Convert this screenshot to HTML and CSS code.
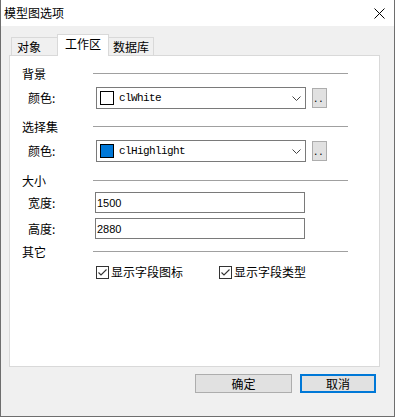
FILE: index.html
```html
<!DOCTYPE html>
<html lang="zh-CN">

<head>
  <meta charset="UTF-8" />
  <meta name="viewport" content="width=device-width, initial-scale=1.0" />
  <title>模型图选项</title>
  <link rel="stylesheet" href="styles.css">
</head>

<body>
  <div class="window">
    <div class="titlebar">
      <span class="title">模型图选项</span>
      <svg class="close" width="11" height="11" viewBox="0 0 11 11">
        <path d="M0.5 0.5 L10.5 10.5 M10.5 0.5 L0.5 10.5" stroke="#000" stroke-width="1" fill="none" />
      </svg>
    </div>

    <div class="content">
      <div class="tabs">
        <div class="tab tab-first">对象</div>
        <div class="tab tab-active">工作区</div>
        <div class="tab tab-last">数据库</div>
      </div>

      <div class="panel">
        <!-- 背景 -->
        <div class="group-head">
          <span class="group-title">背景</span>
          <span class="group-line"></span>
        </div>
        <div class="row row-combo">
          <label class="row-label">颜色:</label>
          <div class="combo">
            <span class="swatch"></span>
            <span class="combo-text">clWhite</span>
            <svg class="chevron" width="9" height="5" viewBox="0 0 9 5">
              <polyline points="0.5,0.5 4.5,4.5 8.5,0.5" stroke="#444" fill="none" />
            </svg>
          </div>
          <button class="dots">..</button>
        </div>

        <!-- 选择集 -->
        <div class="group-head group-gap">
          <span class="group-title">选择集</span>
          <span class="group-line"></span>
        </div>
        <div class="row row-combo">
          <label class="row-label">颜色:</label>
          <div class="combo">
            <span class="swatch swatch-blue"></span>
            <span class="combo-text">clHighlight</span>
            <svg class="chevron" width="9" height="5" viewBox="0 0 9 5">
              <polyline points="0.5,0.5 4.5,4.5 8.5,0.5" stroke="#444" fill="none" />
            </svg>
          </div>
          <button class="dots">..</button>
        </div>

        <!-- 大小 -->
        <div class="group-head group-gap-size">
          <span class="group-title">大小</span>
          <span class="group-line"></span>
        </div>
        <div class="row row-input first-input">
          <label class="row-label label-input">宽度:</label>
          <input class="edit" type="text" value="1500" />
        </div>
        <div class="row row-input">
          <label class="row-label label-input">高度:</label>
          <input class="edit" type="text" value="2880" />
        </div>

        <!-- 其它 -->
        <div class="group-head group-gap-other">
          <span class="group-title">其它</span>
          <span class="group-line"></span>
        </div>
        <div class="row row-checks">
          <label class="check check-first">
            <svg class="box" width="13" height="13" viewBox="0 0 13 13">
              <rect x="0.5" y="0.5" width="12" height="12" fill="#fff" stroke="#333" />
              <polyline points="2.5,6.5 5,9 10.5,3.5" stroke="#333" stroke-width="1.1" fill="none" />
            </svg>
            显示字段图标
          </label>
          <label class="check">
            <svg class="box" width="13" height="13" viewBox="0 0 13 13">
              <rect x="0.5" y="0.5" width="12" height="12" fill="#fff" stroke="#333" />
              <polyline points="2.5,6.5 5,9 10.5,3.5" stroke="#333" stroke-width="1.1" fill="none" />
            </svg>
            显示字段类型
          </label>
        </div>
      </div>

      <div class="buttons">
        <button class="btn btn-ok">确定</button>
        <button class="btn btn-cancel">取消</button>
      </div>
    </div>
  </div>
</body>

</html>
```

FILE: styles.css
```css
body,
html {
  margin: 0;
  padding: 0;
  background: #f0f0f0;
  font-family: "Noto Sans CJK SC", "Liberation Sans", sans-serif;
  font-size: 12px;
  color: #000;
}

.window {
  width: 395px;
  height: 417px;
  box-sizing: border-box;
  border: 1px solid #6e6e6e;
  border-top: none;
  background: #f0f0f0;
  display: flex;
  flex-direction: column;
}

.titlebar {
  height: 26px;
  background: #fff;
  display: flex;
  align-items: center;
  justify-content: space-between;
  padding: 0 9px 0 3px;
}

.title {
  line-height: 16px;
  margin-top: -1px;
}

.close {
  display: block;
  margin-top: 1px;
}

.content {
  padding: 8px 14px 0 8px;
}

/* 标签页 */
.tabs {
  display: flex;
  align-items: flex-end;
  height: 21px;
  padding-left: 2px;
}

.tab {
  box-sizing: border-box;
  height: 18px;
  line-height: 17px;
  border-top: 1px solid #d9d9d9;
  background: #f0f0f0;
  padding-left: 5px;
}

.tab-first {
  width: 46px;
  border-left: 1px solid #d9d9d9;
}

.tab-active {
  width: 52px;
  height: 22px;
  line-height: 18px;
  margin-bottom: -1px;
  border: 1px solid #d9d9d9;
  border-bottom: none;
  background: #fff;
  padding-left: 7px;
  position: relative;
  z-index: 1;
}

.tab-last {
  width: 45px;
  border-right: 1px solid #d9d9d9;
  padding-left: 4px;
}

.panel {
  box-sizing: border-box;
  width: 371px;
  height: 312px;
  border: 1px solid #d9d9d9;
  background: #fff;
  padding: 10px 31px 0 12px;
}

/* 分组标题 */
.group-head {
  display: flex;
  align-items: center;
  height: 16px;
}

.group-gap {
  margin-top: 10px;
}

.group-gap-size {
  margin-top: 11px;
}

.group-gap-other {
  margin-top: 5px;
}

.group-title {
  width: 71px;
  line-height: 16px;
}

.group-line {
  flex: 1;
  height: 1px;
  background: #a0a0a0;
  margin-top: -2px;
}

.row {
  display: flex;
  align-items: center;
  padding-left: 6px;
}

.row-label {
  width: 68px;
  line-height: 16px;
}

.label-input {
  width: 67px;
}

.row-combo {
  margin-top: 5px;
}

.combo {
  box-sizing: border-box;
  width: 210px;
  height: 22px;
  border: 1px solid #7a7a7a;
  display: flex;
  align-items: center;
  padding-left: 3px;
  background: #fff;
}

.swatch {
  box-sizing: border-box;
  width: 14px;
  height: 14px;
  border: 1px solid #000;
  background: #fff;
}

.swatch-blue {
  background: #0078d7;
}

.combo-text {
  margin-left: 5px;
  font-family: "Liberation Mono", monospace;
  font-size: 11px;
  letter-spacing: -0.6px;
}

.chevron {
  display: block;
  margin-left: auto;
  margin-right: 4px;
}

.dots {
  box-sizing: border-box;
  width: 15px;
  height: 20px;
  margin-left: 6px;
  padding: 0 0 0 1px;
  border: 1px solid #adadad;
  background: #e1e1e1;
  font-family: "Liberation Sans", sans-serif;
  font-size: 12px;
  letter-spacing: 2px;
  line-height: 16px;
  text-align: left;
}

.row-input {
  margin-top: 5px;
}

.first-input {
  margin-top: 3px;
}

.edit {
  box-sizing: border-box;
  width: 210px;
  height: 21px;
  margin: 0;
  border: 1px solid #7a7a7a;
  padding: 0 1px;
  font-family: "Liberation Sans", sans-serif;
  font-size: 11px;
  outline: none;
}

.row-checks {
  margin-top: 4px;
  padding-left: 74px;
  height: 16px;
}

.check {
  display: flex;
  align-items: center;
  gap: 2px;
  line-height: 16px;
}

.check-first {
  width: 123px;
}

.box {
  display: block;
}

/* 底部按钮 */
.buttons {
  display: flex;
  justify-content: flex-end;
  gap: 8px;
  margin-top: 7px;
  padding-right: 4px;
}

.btn {
  box-sizing: border-box;
  height: 19px;
  margin: 0;
  padding: 0;
  background: #e1e1e1;
  font-family: "Noto Sans CJK SC", sans-serif;
  font-size: 12px;
  line-height: 15px;
  color: #000;
}

.btn-ok {
  width: 97px;
  border: 1px solid #adadad;
}

.btn-cancel {
  width: 76px;
  border: 2px solid #0078d7;
}
```
